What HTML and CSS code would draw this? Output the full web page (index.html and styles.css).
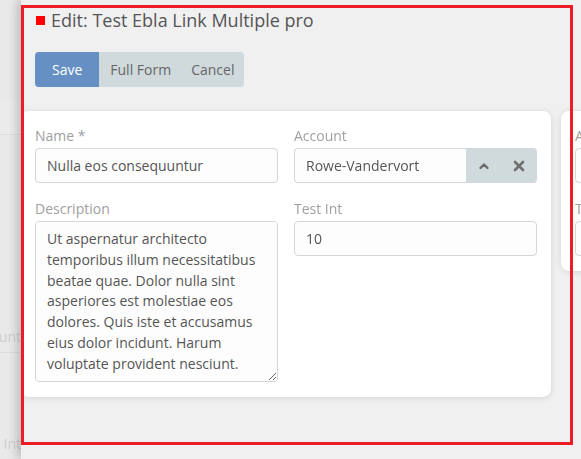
FILE: index.html
```html
<!DOCTYPE html>
<html>
<head>
<meta charset="utf-8">
<link rel="stylesheet" href="styles.css">
</head>
<body>
<div class="page">
  <div class="bg-row bg-head"></div>
  <div class="bg-row bg-a"><span>Account</span></div>
  <div class="bg-row bg-b"><span>Test Int</span></div>
</div>
<div class="drawer">
  <h1 class="title"><span class="dot"></span>Edit: Test Ebla Link Multiple pro</h1>
  <div class="btn-group">
    <button class="btn btn-primary">Save</button>
    <button class="btn">Full Form</button>
    <button class="btn btn-last">Cancel</button>
  </div>
  <div class="cards">
    <div class="card">
      <div class="col">
        <div class="field">
          <label class="label">Name *</label>
          <input class="input" value="Nulla eos consequuntur">
        </div>
        <div class="field">
          <label class="label">Description</label>
          <textarea class="input textarea" rows="7">Ut aspernatur architecto temporibus illum necessitatibus beatae quae. Dolor nulla sint asperiores est molestiae eos dolores. Quis iste et accusamus eius dolor incidunt. Harum voluptate provident nesciunt.</textarea>
        </div>
      </div>
      <div class="col">
        <div class="field">
          <label class="label">Account</label>
          <div class="input-group">
            <input class="input grouped" value="Rowe-Vandervort">
            <div class="addon">
              <span class="addon-btn"><svg width="12" height="12" viewBox="0 0 12 12"><path d="M2.5 8 L6 4.5 L9.5 8" fill="none" stroke="#6b6b6b" stroke-width="2.4" stroke-linecap="round" stroke-linejoin="round"/></svg></span>
              <span class="addon-btn"><svg width="12" height="12" viewBox="0 0 12 12"><path d="M2 2 L10 10 M10 2 L2 10" fill="none" stroke="#6f6f6f" stroke-width="2.6" stroke-linecap="round"/></svg></span>
            </div>
          </div>
        </div>
        <div class="field">
          <label class="label">Test Int</label>
          <input class="input" value="10">
        </div>
      </div>
    </div>
    <div class="card card-next">
      <div class="col">
        <div class="field">
          <label class="label">Account</label>
          <input class="input" value="">
        </div>
        <div class="field">
          <label class="label">Test Int</label>
          <input class="input" value="">
        </div>
      </div>
    </div>
  </div>
</div>
<div class="marker"></div>
</body>
</html>
```
FILE: styles.css
```css
* { box-sizing: border-box; }
html, body { margin: 0; padding: 0; }
body {
  width: 581px;
  height: 459px;
  overflow: hidden;
  background: #e9e9e9;
  font-family: "Open Sans", "Liberation Sans", sans-serif;
  position: relative;
}
.page {
  width: 21px;
  height: 459px;
  overflow: hidden;
  padding-top: 100px;
}
.bg-row {
  border-bottom: 1px solid #dedede;
  white-space: nowrap;
  color: #cfcfcf;
  font-size: 14px;
  display: flex;
  align-items: center;
  justify-content: flex-end;
}
.bg-head { height: 35px; background: #ebebeb; }
.bg-a { height: 218px; align-items: flex-end; padding-bottom: 6px; }
.bg-b { height: 100px; align-items: flex-end; border-bottom: none; padding-bottom: 0; }
.drawer {
  position: absolute;
  left: 21px;
  top: 0;
  right: 0;
  bottom: 0;
  background: #f0f0f0;
  box-shadow: -3px 0 10px rgba(0, 0, 0, 0.22);
  padding: 8px 0 0 14px;
  overflow: hidden;
}
.title {
  margin: 0;
  font-weight: 400;
  font-size: 18px;
  line-height: 24px;
  color: #555;
  display: flex;
  align-items: center;
  white-space: nowrap;
}
.dot {
  width: 9px;
  height: 9px;
  background: #ff0000;
  margin: 0 6px 0 1px;
}
.btn-group {
  display: inline-flex;
  margin-top: 20px;
  border-radius: 4px;
  overflow: hidden;
  background: #d0d9dc;
  height: 35px;
}
.btn {
  border: none;
  background: #d0d9dc;
  color: #666;
  font-family: inherit;
  font-size: 14px;
  padding: 0 10px 0 11px;
  height: 35px;
  cursor: pointer;
}
.btn-last { padding: 0 10px 0 10px; }
.btn-primary {
  background: #6690c4;
  color: #fff;
  padding: 0 17px;
}
.cards {
  display: flex;
  gap: 10px;
  margin-top: 24px;
  margin-left: -14px;
  align-items: flex-start;
}
.card {
  flex: none;
  width: 530px;
  background: #fff;
  border-radius: 8px;
  box-shadow: 0 1px 6px rgba(0, 0, 0, 0.12);
  padding: 15px 14px 15px 14px;
  display: flex;
  gap: 16px;
}
.card-next { width: 300px; }
.col {
  width: 243px;
  display: flex;
  flex-direction: column;
  gap: 16px;
}
.field { display: flex; flex-direction: column; }
.label {
  font-size: 14px;
  line-height: 20px;
  color: #a0a0a0;
  margin-bottom: 2px;
}
.input {
  height: 35px;
  width: 100%;
  border: 1px solid #d6d6d6;
  border-radius: 4px;
  background: #fdfdfd;
  font-family: inherit;
  font-size: 14px;
  color: #555;
  padding: 0 11px;
  outline: none;
}
.textarea {
  height: 161px;
  line-height: 20.8px;
  padding: 7px 11px;
  resize: both;
}
.input-group { display: flex; height: 35px; }
.grouped {
  flex: 1;
  min-width: 0;
  border-radius: 4px 0 0 4px;
  border-right: none;
}
.addon {
  display: flex;
  background: #d0d9dc;
  border-radius: 0 4px 4px 0;
  width: 71px;
  flex: none;
}
.addon-btn {
  width: 35px;
  display: flex;
  align-items: center;
  justify-content: center;
}
.marker {
  position: absolute;
  left: 21px;
  top: 5px;
  width: 552px;
  height: 440px;
  border: 3px solid #ee1c25;
  pointer-events: none;
}
```
